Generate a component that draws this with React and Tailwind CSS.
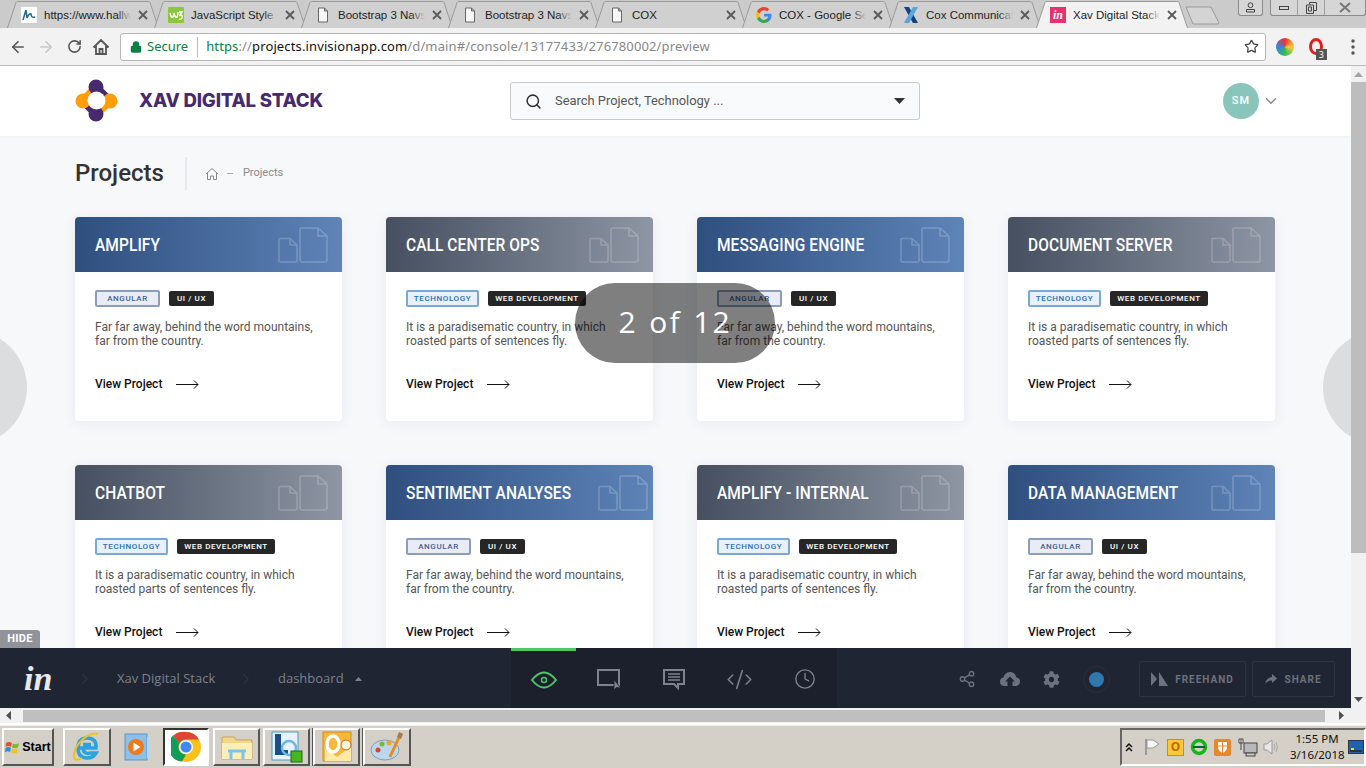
import { ArrowLeft, ArrowRight, RotateCw, Lock, Star, Search, ChevronDown, ChevronRight, Clock, Share2, CodeXml } from 'lucide-react'
import { FaCog } from 'react-icons/fa'

const PROJECTS = [
  { title: 'AMPLIFY', kind: 'a' },
  { title: 'CALL CENTER OPS', kind: 't' },
  { title: 'MESSAGING ENGINE', kind: 'a' },
  { title: 'DOCUMENT SERVER', kind: 't' },
  { title: 'CHATBOT', kind: 't' },
  { title: 'SENTIMENT ANALYSES', kind: 'a' },
  { title: 'AMPLIFY - INTERNAL', kind: 't' },
  { title: 'DATA MANAGEMENT', kind: 'a' },
]

const TABS = [
  { label: 'https://www.hallw', icon: 'hall' },
  { label: 'JavaScript Style G', icon: 'w3' },
  { label: 'Bootstrap 3 Navs', icon: 'doc' },
  { label: 'Bootstrap 3 Navs', icon: 'doc' },
  { label: 'COX', icon: 'doc' },
  { label: 'COX - Google Sea', icon: 'google' },
  { label: 'Cox Communicati', icon: 'cox' },
  { label: 'Xav Digital Stack', icon: 'in', active: true },
]

function Favicon({ type }) {
  if (type === 'hall') {
    return (
      <svg width="16" height="16" viewBox="0 0 16 16" className="shrink-0">
        <rect width="16" height="16" fill="#fff" />
        <path d="M2 13 L5 3 L6 11 Q8 6 10 7 Q10 11 14 10" fill="none" stroke="#1d6a8a" strokeWidth="1.5" />
      </svg>
    )
  }
  if (type === 'w3') {
    return (
      <svg width="16" height="16" viewBox="0 0 16 16" className="shrink-0">
        <rect width="16" height="16" rx="1" fill="#8cc63f" />
        <path d="M2 6 Q3 11 5 10 Q6 9 6 6 Q7 11 9 10 Q10 8 10 5 M11 5 H14 L12 8 Q15 8 14 11 Q13 13 11 12" fill="none" stroke="#fff" strokeWidth="1.4" />
      </svg>
    )
  }
  if (type === 'google') {
    return (
      <svg width="16" height="16" viewBox="0 0 16 16" className="shrink-0">
        <path d="M15.5 8.2c0-.6-.1-1-.2-1.500H8v2.900h4.200c-.2 1-.7 1.800-1.600 2.400v2h2.500c1.500-1.300 2.400-3.300 2.400-5.800z" fill="#4285f4" />
        <path d="M8 16c2.100 0 3.900-.7 5.100-1.900l-2.500-2c-.7.500-1.500.8-2.600.8-2 0-3.700-1.400-4.300-3.200H1v2C2.300 14.300 5 16 8 16z" fill="#34a853" />
        <path d="M3.700 9.700c-.3-1-.3-2.300 0-3.300v-2H1c-1.100 2.200-1.100 5.100 0 7.300z" fill="#fbbc05" />
        <path d="M8 3.200c1.100 0 2.200.4 3 1.200l2.200-2.200C11.900.9 10 0 8 0 5 0 2.300 1.800 1 4.400l2.700 2C4.300 4.600 6 3.200 8 3.200z" fill="#ea4335" />
      </svg>
    )
  }
  if (type === 'cox') {
    return (
      <svg width="16" height="18" viewBox="0 0 16 18" className="shrink-0">
        <path d="M1 1 L6 1 L15 17 L10 17 Z" fill="#12417c" />
        <path d="M15 1 L10 1 L1 17 L6 17 Z" fill="#5ba3d9" />
      </svg>
    )
  }
  if (type === 'in') {
    return (
      <div className="flex h-4 w-4 shrink-0 items-center justify-center bg-[#ec2f6d] font-['Liberation_Serif',serif] text-[12px] font-bold italic leading-none text-white">in</div>
    )
  }
  return (
    <svg width="12" height="16" viewBox="0 0 12 16" className="ml-[2px] mr-[2px] shrink-0">
      <path d="M1.500 1 H7.500 L10.500 4 V15 H1.500 Z M7.500 1 V4 H10.500" fill="#f6f6f6" stroke="#666" strokeWidth="1" />
    </svg>
  )
}

function Tab({ tab }) {
  const fill = tab.active ? '#f2f2f2' : '#d0d0d0'
  return (
    <div className={`relative -mr-[5px] flex h-[27px] w-[152px] shrink-0 items-center pl-[14px] pr-[11px] ${tab.active ? 'z-10' : ''}`}>
      <svg width="152" height="27" viewBox="0 0 152 27" className="absolute left-0 top-0">
        <path d="M0.500 27 L9 1.500 Q9.500 0.500 11 0.500 H141 Q142.500 0.500 143 1.500 L151.500 27" fill={fill} stroke="#9a9a9a" />
      </svg>
      <div className="relative flex min-w-0 flex-1 items-center gap-[7px]">
        <Favicon type={tab.icon} />
        <div className="relative w-[88px] overflow-hidden whitespace-nowrap font-['Liberation_Sans',sans-serif] text-[11.5px] leading-[14px] text-[#222]">
          {tab.label}
          <div className={`absolute right-0 top-0 h-full w-[14px] bg-gradient-to-r from-transparent ${tab.active ? 'to-[#f2f2f2]' : 'to-[#d0d0d0]'}`} />
        </div>
        <svg width="10" height="10" viewBox="0 0 10 10" className="ml-auto shrink-0">
          <path d="M1 1 L9 9 M9 1 L1 9" stroke="#5a5a5a" strokeWidth="1.800" />
        </svg>
      </div>
    </div>
  )
}

function TabStrip() {
  return (
    <div className="flex h-[28px] shrink-0 items-end justify-between bg-[#cbcbcb] pl-[7px]">
      <div className="flex items-end">
        {TABS.map((t, i) => <Tab key={i} tab={t} />)}
        <svg width="36" height="20" viewBox="0 0 36 20" className="mb-[3px] ml-[2px]">
          <path d="M1 2 H26 L34 18 Q34 19 32 19 H8 Z" fill="#d4d4d4" stroke="#9a9a9a" />
        </svg>
      </div>
      <div className="flex h-full items-start">
        <div className="flex h-[16px] w-[25px] items-center justify-center rounded-b-[3px] border border-t-0 border-[#8a8a8a] bg-[#d6d6d6]">
          <svg width="11" height="11" viewBox="0 0 11 11"><circle cx="5.500" cy="3.200" r="2.400" fill="none" stroke="#444" /><path d="M1.500 10 V7.500 H9.500 V10 Z" fill="none" stroke="#444" /></svg>
        </div>
        <div className="ml-[7px] flex h-[16px] w-[96px] items-center rounded-b-[3px] border border-t-0 border-[#8a8a8a] bg-[#d6d6d6]">
          <div className="flex h-full w-[27px] items-center justify-center border-r border-[#a0a0a0]">
            <div className="h-[4px] w-[10px] border border-[#444]" />
          </div>
          <div className="flex h-full w-[27px] items-center justify-center border-r border-[#a0a0a0]">
            <svg width="11" height="12" viewBox="0 0 11 12"><path d="M3.500 2.500 V0.500 H10.500 V8.500 H8 M0.500 3 H7.500 V11.500 H0.500 Z M2.500 5 H5.500 V9 H2.500 Z" fill="none" stroke="#444" /></svg>
          </div>
          <div className="flex h-full flex-1 items-center justify-center">
            <svg width="12" height="11" viewBox="0 0 12 11"><path d="M1 1 L11 10 M11 1 L1 10" stroke="#777" strokeWidth="2" /></svg>
          </div>
        </div>
      </div>
    </div>
  )
}

function Toolbar() {
  return (
    <div className="flex h-[38px] shrink-0 items-center border-b border-[#b8b8b8] bg-[#f2f2f2] pl-[9px]">
      <ArrowLeft size={18} strokeWidth={2.200} className="text-[#555]" />
      <ArrowRight size={18} strokeWidth={2.200} className="ml-[10px] text-[#c8c8c8]" />
      <RotateCw size={15} strokeWidth={2.500} className="ml-[12px] text-[#555]" />
      <svg width="18" height="18" viewBox="0 0 18 18" className="ml-[10px]">
        <path d="M1.500 9.500 L9 2 L16.500 9.500 M4 8 V16 H14 V8 M7.500 16 V11 H10.500 V16" fill="none" stroke="#555" strokeWidth="1.800" />
      </svg>
      <div className="ml-[10px] flex h-[28px] w-[1146px] items-center rounded-[3px] border border-[#b5b5b5] bg-white pl-[9px] pr-[6px] font-['Noto_Sans',sans-serif] text-[13px]">
        <Lock size={12} strokeWidth={3} className="text-[#0b8043]" fill="#0b8043" />
        <span className="ml-[5px] text-[#0b8043]">Secure</span>
        <div className="ml-[9px] mr-[8px] h-[20px] w-px bg-[#bbb]" />
        <span className="whitespace-nowrap tracking-[0.13px]">
          <span className="text-[#0b8043]">https</span>
          <span className="text-[#888]">://</span>
          <span className="text-[#111]">projects.invisionapp.com</span>
          <span className="text-[#888]">/d/main#/console/13177433/276780002/preview</span>
        </span>
        <Star size={15} strokeWidth={2} className="ml-auto text-[#444]" />
      </div>
      <div className="ml-[10px] h-[18px] w-[18px] rounded-full bg-[conic-gradient(#e33,#fc3,#3b5,#38d,#e33)]" />
      <div className="relative ml-[10px] flex h-[24px] w-[24px] items-center justify-center">
        <div className="h-[17px] w-[14px] rounded-[50%] border-[3px] border-[#dd1f1f]" />
        <div className="absolute bottom-[-1px] right-[1px] bg-[#555] px-[3px] text-[9px] leading-[11px] text-white">3</div>
      </div>
      <svg width="4" height="16" viewBox="0 0 4 16" className="ml-[23px]">
        <circle cx="2" cy="2" r="1.700" fill="#555" /><circle cx="2" cy="8" r="1.700" fill="#555" /><circle cx="2" cy="14" r="1.700" fill="#555" />
      </svg>
    </div>
  )
}

function XavLogo() {
  return (
    <svg width="44" height="44" viewBox="0 0 44 44" className="shrink-0">
      <path d="M21 8 L35 22" stroke="#472a6e" strokeWidth="8" />
      <path d="M35 22 L21 35" stroke="#ff9d0a" strokeWidth="8" />
      <path d="M21 35 L8 22" stroke="#472a6e" strokeWidth="8" />
      <path d="M8 22 L21 8" stroke="#ff9d0a" strokeWidth="8" />
      <circle cx="8" cy="22" r="7.500" fill="#ff9d0a" />
      <circle cx="35" cy="22" r="7.500" fill="#ff9d0a" />
      <circle cx="21" cy="8" r="7.500" fill="#472a6e" />
      <circle cx="21" cy="35" r="7.500" fill="#472a6e" />
      <circle cx="21.500" cy="21.500" r="9" fill="#fff" />
    </svg>
  )
}

function SiteHeader() {
  return (
    <div className="flex h-[70px] shrink-0 items-center bg-white pl-[75px] shadow-[0_1px_3px_rgba(0,0,0,0.04)]">
      <XavLogo />
      <div className="ml-[20px] w-[371px] whitespace-nowrap font-['Inter',sans-serif] text-[18.600px] font-extrabold tracking-[-0.2px] text-[#472a6e]">XAV DIGITAL STACK</div>
      <div className="flex h-[38px] w-[410px] items-center rounded-[3px] border border-[#c9c9c9] bg-[#f9fafc] pl-[14px] pr-[14px]">
        <Search size={17} strokeWidth={2.200} className="text-[#333]" />
        <span className="ml-[13px] font-['Roboto',sans-serif] text-[12.900px] text-[#555]">Search Project, Technology ...</span>
        <svg width="11" height="6" viewBox="0 0 11 6" className="ml-auto"><path d="M0 0 H11 L5.500 6 Z" fill="#333" /></svg>
      </div>
      <div className="ml-[303px] flex h-[36px] w-[36px] items-center justify-center rounded-full bg-[#89c5bb] font-['Roboto',sans-serif] text-[11px] font-medium tracking-[1px] text-white">SM</div>
      <ChevronDown size={18} strokeWidth={2} className="ml-[3px] text-[#8b8b8b]" />
    </div>
  )
}

function DocGlyphs() {
  return (
    <svg width="50" height="36" viewBox="0 0 50 36" className="shrink-0 text-white opacity-20">
      <path d="M1 12.500 Q1 11.500 2 11.500 H12 L19 18 V34 Q19 35 18 35 H2 Q1 35 1 34 Z M12 11.500 V18 H19" fill="none" stroke="currentColor" strokeWidth="1.500" />
      <path d="M22 2 Q22 1 23 1 H40 L49 9 V33 Q49 35 47 35 H24 Q22 35 22 33 Z M40 1 V9 H49" fill="none" stroke="currentColor" strokeWidth="1.500" />
    </svg>
  )
}

function ProjectCard({ project }) {
  const isAngular = project.kind === 'a'
  return (
    <div className="overflow-hidden rounded-[4px] bg-white shadow-[0_2px_14px_rgba(60,70,100,0.08)]">
      <div className={`flex h-[55px] items-center justify-between pl-5 pr-[14px] bg-gradient-to-r ${isAngular ? 'from-[#2f4f7f] to-[#5f84b8]' : 'from-[#465060] to-[#8e96a4]'}`}>
        <span className="origin-left scale-x-[0.86] whitespace-nowrap font-['Roboto',sans-serif] text-[18px] font-medium tracking-[0.1px] text-white">{project.title}</span>
        <DocGlyphs />
      </div>
      <div className="px-5 pb-[29px] pt-[18px]">
        <div className="flex items-center gap-[9px] font-['Roboto',sans-serif] text-[8px] font-medium tracking-[0.6px]">
          {isAngular ? (
            <span className="flex h-[17px] w-[65px] items-center justify-center rounded-[2px] border-2 border-[#8c9dbb] bg-[#e9edf3] text-[#3f5d8f]">ANGULAR</span>
          ) : (
            <span className="flex h-[17px] w-[73px] items-center justify-center rounded-[2px] border-2 border-[#78a8d8] bg-[#e8f1fa] text-[#2a6db5]">TECHNOLOGY</span>
          )}
          {isAngular ? (
            <span className="flex h-[15px] w-[45px] items-center justify-center rounded-[2px] bg-[#262626] text-white">UI / UX</span>
          ) : (
            <span className="flex h-[15px] w-[98px] items-center justify-center rounded-[2px] bg-[#262626] text-white">WEB DEVELOPMENT</span>
          )}
        </div>
        <p className="mt-[13px] whitespace-pre-line font-['Roboto',sans-serif] text-[12px] leading-[14px] text-[#555]">
          {isAngular ? 'Far far away, behind the word mountains,\nfar from the country.' : 'It is a paradisematic country, in which\nroasted parts of sentences fly.'}
        </p>
        <div className="mt-[28px] flex h-[16px] items-center font-['Roboto',sans-serif] text-[12px] font-medium text-[#111]">
          View Project
          <svg width="23" height="9" viewBox="0 0 23 9" className="ml-[14px]">
            <path d="M0 4.500 H22 M18 0.500 L22 4.500 L18 8.500" fill="none" stroke="#111" strokeWidth="1" />
          </svg>
        </div>
      </div>
    </div>
  )
}

function InvisionBar() {
  return (
    <div className="flex h-[60px] shrink-0 bg-[#1f2533] font-['Open_Sans',sans-serif] text-[13px] text-[#7d828c]">
      <div className="flex w-[511px] items-center pl-[24px] pt-[2px]">
        <div className="w-[29px] font-['Liberation_Serif',serif] text-[34px] font-bold italic leading-none text-[#e8e9ea]">in</div>
        <ChevronRight size={18} strokeWidth={1} className="ml-[23px] text-[#3c4250]" />
        <span className="ml-[23px] w-[99px] whitespace-nowrap">Xav Digital Stack</span>
        <ChevronRight size={18} strokeWidth={1} className="ml-[21px] text-[#3c4250]" />
        <span className="ml-[23px] whitespace-nowrap">dashboard</span>
        <svg width="7" height="4" viewBox="0 0 7 4" className="ml-[11px]"><path d="M0 4 L3.500 0 L7 4 Z" fill="#7d828c" /></svg>
      </div>

      <div className="flex w-[326px] bg-[#1b202c]">
        <div className="flex w-[65px] items-center justify-center border-t-[3px] border-[#4fc469]">
          <svg width="28" height="20" viewBox="0 0 28 20">
            <path d="M2 10 Q14 -5 26 10 Q14 25 2 10 Z" fill="none" stroke="#4fc469" strokeWidth="2" />
            <circle cx="14" cy="10" r="2.500" fill="none" stroke="#4fc469" strokeWidth="1.500" />
          </svg>
        </div>
        <div className="flex w-[65px] items-center justify-center pt-[2px]">
          <svg width="26" height="24" viewBox="0 0 26 24">
            <path d="M2 3 H23 V18 H2 Z" fill="none" stroke="#7d828c" strokeWidth="2" />
            <path d="M18 13 L18 23 L20.500 20.500 L25 21 Z" fill="#7d828c" stroke="#1b202c" strokeWidth="0.800" />
          </svg>
        </div>
        <div className="flex w-[65px] items-center justify-center pt-[2px]">
          <svg width="22" height="22" viewBox="0 0 22 22">
            <path d="M1 2 H21 V16 H15 V20 L11 16 H1 Z" fill="none" stroke="#7d828c" strokeWidth="2" />
            <path d="M5 6 H17 M5 9 H17 M5 12 H17" stroke="#7d828c" strokeWidth="1.300" />
          </svg>
        </div>
        <div className="flex w-[67px] items-center justify-center pt-[2px]">
          <CodeXml size={27} strokeWidth={1.400} className="text-[#7d828c]" />
        </div>
        <div className="flex w-[64px] items-center justify-center pt-[2px]">
          <Clock size={22} strokeWidth={1.500} className="text-[#7d828c]" />
        </div>
      </div>

      <div className="flex flex-1 items-center pl-[121px] pt-[2px]">
        <Share2 size={18} strokeWidth={1.800} className="text-[#6d727d]" />
        <svg width="20" height="18" viewBox="0 0 20 18" className="ml-[24px]">
          <path d="M5 16 Q0 16 0 11.500 Q0 8 3.500 7.500 Q5 2 10 2 Q15 2 16.500 7.500 Q20 8 20 11.500 Q20 16 15 16 H12.500 V11.500 H15 L10 6.500 L5 11.500 H7.500 V16 Z" fill="#6d727d" />
        </svg>
        <FaCog size={17} className="ml-[23px] text-[#6d727d]" />
        <div className="ml-[23px] flex h-[27px] w-[27px] items-center justify-center rounded-full border border-[#2a3040]">
          <div className="h-[15px] w-[15px] rounded-full bg-[#2f77ad]" />
        </div>
        <div className="ml-[29px] flex h-[36px] w-[107px] items-center justify-center gap-[7px] rounded-[2px] border border-[#2d3342] font-['Roboto',sans-serif] text-[10px] font-bold tracking-[1px] text-[#6d727d]">
          <svg width="17" height="14" viewBox="0 0 17 14"><path d="M0 0 L6 7 L0 14 Z M8 0 L17 14 H8 Z" fill="#6d727d" /></svg>
          FREEHAND
        </div>
        <div className="ml-[6px] flex h-[36px] w-[83px] items-center justify-center gap-[7px] rounded-[2px] border border-[#2d3342] font-['Roboto',sans-serif] text-[10px] font-bold tracking-[1px] text-[#6d727d]">
          <svg width="12" height="10" viewBox="0 0 12 10"><path d="M7 0 L12 4.500 L7 9 V6.500 Q3 6 0 10 Q1 4 7 3 Z" fill="#6d727d" /></svg>
          SHARE
        </div>
      </div>
    </div>
  )
}

function VerticalScrollbar() {
  return (
    <div className="flex w-[15px] shrink-0 flex-col items-center bg-[#f1f1f1]">
      <svg width="9" height="5" viewBox="0 0 9 5" className="mt-[6px]"><path d="M0 5 L4.500 0 L9 5 Z" fill="#a5a5a5" /></svg>
      <div className="mt-[5px] h-[471px] w-full bg-[#bdbdbd]" />
      <svg width="9" height="5" viewBox="0 0 9 5" className="mb-[6px] mt-auto"><path d="M0 0 L4.500 5 L9 0 Z" fill="#505050" /></svg>
    </div>
  )
}

function HorizontalScrollbar() {
  return (
    <div className="flex h-[17px] shrink-0 items-center border-b-2 border-white bg-[#f1f1f1]">
      <svg width="5" height="9" viewBox="0 0 5 9" className="ml-[6px]"><path d="M5 0 L0 4.500 L5 9 Z" fill="#505050" /></svg>
      <div className="ml-[12px] h-[12px] w-[1302px] bg-[#bfbfbf]" />
      <svg width="5" height="9" viewBox="0 0 5 9" className="ml-[14px]"><path d="M0 0 L5 4.500 L0 9 Z" fill="#505050" /></svg>
      <div className="ml-auto h-full w-[15px] bg-[#f1f1f1]" />
    </div>
  )
}

// classic raised / pressed win7 taskbar buttons
const RAISED = 'border-2 border-t-white border-l-white border-r-[#555] border-b-[#555]'
const PRESSED = 'border-2 border-t-[#333] border-l-[#333] border-r-white border-b-white'

function TaskBtn({ className, pressed, flat, children }) {
  return (
    <div className={`flex h-[38px] items-center justify-center ${flat ? '' : pressed ? PRESSED : RAISED} ${className}`}>
      {children}
    </div>
  )
}

function ChromeLogo({ size = 30 }) {
  return (
    <svg width={size} height={size} viewBox="0 0 30 30">
      <circle cx="15" cy="15" r="15" fill="#fbc116" />
      <path d="M15 0 A15 15 0 0 1 28 7.500 L15 7.500 A7.500 7.500 0 0 0 8.500 11.200 L2 3.800 A15 15 0 0 1 15 0 Z" fill="#db4437" />
      <path d="M2 3.800 L8.500 11.200 A7.500 7.500 0 0 0 15 22.500 L11 29.500 A15 15 0 0 1 2 3.800 Z" fill="#0f9d58" />
      <circle cx="15" cy="15" r="7" fill="#fff" />
      <circle cx="15" cy="15" r="5.500" fill="#4285f4" />
    </svg>
  )
}

function Taskbar() {
  return (
    <div className="flex h-[43px] shrink-0 items-center border-t border-[#efefef] bg-[#d4d0c8] pl-[2px]">
      <TaskBtn className="w-[52px] gap-[2px] font-['Liberation_Sans',sans-serif] text-[12.5px] font-bold text-black">
        <svg width="15" height="15" viewBox="0 0 15 15">
          <path d="M1 3 Q4 1 7 3 L6 7 Q3 5 0.500 7 Z" fill="#e8502a" />
          <path d="M8 3.500 Q11 5 14 3 L13 7.500 Q10 9 7 7.500 Z" fill="#7db82e" />
          <path d="M0.500 8 Q3 6 6 8 L5 12 Q2.500 10.500 0 12.500 Z" fill="#2c8fd9" />
          <path d="M7 8.500 Q10 10 13 8.500 L12 13 Q9 14 6 12.500 Z" fill="#f7c028" />
        </svg>
        Start
      </TaskBtn>
      <TaskBtn className="ml-[9px] w-[48px]">
        <svg width="32" height="32" viewBox="0 0 32 32">
          <path d="M8 17 H25 Q26 7 16 7 Q7 7 7 17 Q7 27 16 27 Q22 27 25 22 H19 Q17 23 15 22 Q12 21 12 17 M12 13.500 H20" fill="none" stroke="#2aa3e0" strokeWidth="3.500" />
          <path d="M27 3 Q20 1 11 9 Q2 18 3 26 Q4 31 11 27" fill="none" stroke="#f5c01f" strokeWidth="2" />
        </svg>
      </TaskBtn>
      <TaskBtn flat className="ml-[9px] w-[35px]">
        <svg width="28" height="30" viewBox="0 0 28 30">
          <rect x="1" y="2" width="22" height="26" fill="#8cc0e8" stroke="#5b94c4" />
          <rect x="23" y="5" width="3" height="21" fill="#b5d6ee" />
          <circle cx="12" cy="15" r="8" fill="#ee7a1b" />
          <path d="M9.500 10.500 L16.500 15 L9.500 19.500 Z" fill="#fff" />
        </svg>
      </TaskBtn>
      <TaskBtn pressed className="ml-[8px] w-[46px] bg-white">
        <ChromeLogo />
      </TaskBtn>
      <TaskBtn className="ml-[4px] w-[47px]">
        <svg width="32" height="30" viewBox="0 0 32 30">
          <path d="M1 5 H13 L15 8 H31 V27 H1 Z" fill="#f0d78c" stroke="#c9a64e" />
          <path d="M1 11 H31 V27 H1 Z" fill="#fbeeb8" />
          <path d="M10 27 V19 H22 V27 M7 19 H25" fill="none" stroke="#7ec4e6" strokeWidth="3" />
        </svg>
      </TaskBtn>
      <TaskBtn className="ml-[3px] w-[47px] shadow-[2px_0_0_#d4d0c8,3px_0_0_#555]">
        <svg width="32" height="32" viewBox="0 0 32 32">
          <rect x="1" y="1" width="26" height="28" fill="#e6f3fa" stroke="#4d9ac9" />
          <path d="M4 3 H10 V19 H17 V24 H4 Z" fill="#184f87" />
          <circle cx="18" cy="17" r="7" fill="none" stroke="#6cb8de" strokeWidth="2.500" />
          <rect x="20" y="20" width="11" height="11" fill="#49b521" stroke="#1a6a0e" />
        </svg>
      </TaskBtn>
      <TaskBtn className="ml-[3px] w-[47px] shadow-[2px_0_0_#d4d0c8,3px_0_0_#555]">
        <svg width="32" height="32" viewBox="0 0 32 32">
          <rect x="2" y="1" width="28" height="29" fill="#f6b73c" stroke="#d88a10" />
          <path d="M4 17 L16 26 L30 15 V30 H4 Z" fill="#fde9a8" />
          <ellipse cx="12" cy="13" rx="6" ry="8" fill="none" stroke="#fff" strokeWidth="3.500" />
          <circle cx="25" cy="14" r="5" fill="#fdf3d8" stroke="#c66a1a" />
        </svg>
      </TaskBtn>
      <TaskBtn className="ml-[3px] w-[48px]">
        <svg width="34" height="32" viewBox="0 0 34 32">
          <ellipse cx="15" cy="19" rx="14" ry="10" fill="#bcd6ea" stroke="#7d9fc0" />
          <circle cx="8" cy="19" r="2.500" fill="#d9453a" />
          <circle cx="12" cy="13" r="2.500" fill="#7db82e" />
          <circle cx="19" cy="12" r="2.500" fill="#f2a71f" />
          <path d="M31 2 L20 26" stroke="#e88a1d" strokeWidth="3" />
          <path d="M29 1 L33 3 L31 8 L27 6 Z" fill="#a97a4c" />
        </svg>
      </TaskBtn>

      <div className="ml-auto flex h-[38px] w-[246px] items-center border-2 border-b-white border-l-[#666] border-r-white border-t-[#666]">
        <svg width="14" height="11" viewBox="0 0 14 11">
          <path d="M4 5 L7 2 L10 5 M4 9 L7 6 L10 9" fill="none" stroke="#111" strokeWidth="1.500" />
        </svg>
        <svg width="16" height="18" viewBox="0 0 16 18" className="ml-[8px]">
          <path d="M2 1 V17" stroke="#888" strokeWidth="1.500" />
          <path d="M3 2 H9 L15 6 L9 10 H3 Z" fill="#f5f5f5" stroke="#999" />
        </svg>
        <div className="ml-[7px] flex h-[17px] w-[17px] items-center justify-center border border-[#d98a0b] bg-[#f9c93c] text-[12px] font-bold leading-none text-[#c46a05]">O</div>
        <svg width="18" height="18" viewBox="0 0 18 18" className="ml-[6px]">
          <circle cx="9" cy="9" r="6.500" fill="none" stroke="#19b31b" strokeWidth="3.500" />
          <path d="M3 9 H15" stroke="#063" strokeWidth="2" />
        </svg>
        <div className="ml-[6px] flex h-[17px] w-[17px] items-center justify-center rounded-[2px] bg-[#e7872a]">
          <svg width="11" height="12" viewBox="0 0 11 12"><path d="M1 1 H10 V6 Q10 10 5.500 12 Q1 10 1 6 Z" fill="#fff" /><path d="M5.500 1 V12 M1 5 H10" stroke="#e7872a" /></svg>
        </div>
        <svg width="20" height="19" viewBox="0 0 20 19" className="ml-[7px]">
          <rect x="6" y="5" width="13" height="10" fill="#b8b8b8" stroke="#444" />
          <rect x="8" y="15" width="9" height="3" fill="#ccc" stroke="#444" />
          <path d="M3 1 V12 M1 1 H5 V5 H1 Z" fill="#fff" stroke="#444" />
        </svg>
        <svg width="17" height="18" viewBox="0 0 17 18" className="ml-[5px]">
          <path d="M1 6 H4 L9 2 V16 L4 12 H1 Z" fill="#e8e8e8" stroke="#999" />
          <path d="M11 6 Q13 9 11 12 M13 4 Q16 9 13 14" fill="none" stroke="#aaa" />
        </svg>
        <div className="ml-[10px] w-[54px] whitespace-nowrap text-center font-['Noto_Sans',sans-serif] text-[11.5px] leading-[16px] text-[#111]">
          1:55 PM<br />3/16/2018
        </div>
        <svg width="16" height="14" viewBox="0 0 16 14" className="ml-[4px]">
          <rect x="0.500" y="0.500" width="15" height="13" fill="#1f62b0" stroke="#334" />
          <rect x="2" y="10" width="12" height="2" fill="#333" />
          <rect x="3" y="8" width="3" height="2" fill="#ffd24a" />
        </svg>
      </div>
    </div>
  )
}

export default function App() {
  return (
    <div className="flex h-[768px] w-[1366px] flex-col overflow-hidden bg-white">
      <TabStrip />
      <Toolbar />
      <div className="relative flex min-h-0 flex-1">
        <div className="flex min-w-0 flex-1 flex-col">
          <div className="relative min-h-0 flex-1 overflow-hidden bg-[#f7f8fa]">
            <SiteHeader />
            <div className="flex items-center pl-[75px] pt-[21px]">
              <h1 className="font-['Roboto',sans-serif] text-[24px] font-medium leading-[33px] text-[#333]">Projects</h1>
              <div className="ml-[21px] h-[33px] w-[2px] bg-[#e8e9ec]" />
              <svg width="14" height="14" viewBox="0 0 14 14" className="ml-[18px]">
                <path d="M1 7 L7 1.500 L13 7 M2.500 6 V12.500 H5.500 V9 H8.500 V12.500 H11.500 V6" fill="none" stroke="#888" strokeWidth="1" />
              </svg>
              <span className="ml-[8px] h-px w-[6px] bg-[#aaa]" />
              <span className="ml-[10px] font-['Roboto',sans-serif] text-[11px] text-[#8a8a8a]">Projects</span>
            </div>
            <div className="mt-[27px] grid w-[1276px] grid-cols-[repeat(4,267px)] gap-[44px] pl-[75px]">
              {PROJECTS.map(p => <ProjectCard key={p.title} project={p} />)}
            </div>
            {/* prev / next arrows of the prototype player */}
            <div className="absolute left-[-88px] top-[264px] h-[115px] w-[115px] rounded-full bg-[#dcdddf]" />
            <div className="absolute left-[1323px] top-[264px] h-[115px] w-[115px] rounded-full bg-[#dcdddf]" />
            <div className="absolute left-0 top-[564px] flex h-[18px] w-[40px] items-center justify-center rounded-tr-[3px] bg-[#909399] font-['Roboto',sans-serif] text-[11px] font-bold tracking-[0.3px] text-white">HIDE</div>
          </div>
          <InvisionBar />
        </div>
        <VerticalScrollbar />
        <div className="absolute left-[575px] top-[217px] flex h-[80px] w-[200px] items-center justify-center rounded-full bg-[rgba(0,0,0,0.5)] pb-[3px] font-['Open_Sans',sans-serif] text-[30px] tracking-[2px] text-white [word-spacing:2px]">2 of 12</div>
      </div>
      <HorizontalScrollbar />
      <Taskbar />
    </div>
  )
}
